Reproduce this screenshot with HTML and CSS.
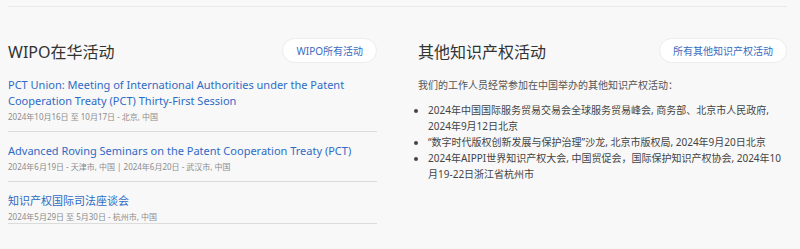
FILE: index.html
```html
<!DOCTYPE html>
<html lang="zh">
<head>
  <meta charset="UTF-8" />
  <title>WIPO在华活动</title>
  <link rel="stylesheet" href="styles.css">
</head>
<body>

<div class="events">
  <section class="col">
    <div class="col-head">
      <h2>WIPO在华活动</h2>
      <a class="pill" href="#">WIPO所有活动</a>
    </div>
    <ul class="event-list">
      <li class="event">
        <a href="#">PCT Union: Meeting of International Authorities under the Patent Cooperation Treaty (PCT) Thirty-First Session</a>
        <div class="meta">2024年10月16日 至 10月17日 - 北京, 中国</div>
      </li>
      <li class="event">
        <a href="#">Advanced Roving Seminars on the Patent Cooperation Treaty (PCT)</a>
        <div class="meta">2024年6月19日 - 天津市, 中国 | 2024年6月20日 - 武汉市, 中国</div>
      </li>
      <li class="event">
        <a href="#">知识产权国际司法座谈会</a>
        <div class="meta">2024年5月29日 至 5月30日 - 杭州市, 中国</div>
      </li>
    </ul>
  </section>

  <section class="col">
    <div class="col-head">
      <h2>其他知识产权活动</h2>
      <a class="pill" href="#">所有其他知识产权活动</a>
    </div>
    <p class="intro">我们的工作人员经常参加在中国举办的其他知识产权活动：</p>
    <ul class="bullets">
      <li>2024年中国国际服务贸易交易会全球服务贸易峰会, 商务部、北京市人民政府, 2024年9月12日北京</li>
      <li>“数字时代版权创新发展与保护治理”沙龙, 北京市版权局, 2024年9月20日北京</li>
      <li>2024年AIPPI世界知识产权大会, 中国贸促会，国际保护知识产权协会, 2024年10月19-22日浙江省杭州市</li>
    </ul>
  </section>
</div>

</body>
</html>
```

FILE: styles.css
```css
* { box-sizing: border-box; }

html, body {
  margin: 0;
  padding: 0;
  background: #f8f8f8;
  font-family: "Noto Sans", "Noto Sans CJK SC", sans-serif;
  color: #444;
  overflow: hidden;
}

.events {
  margin: 6px 13px 0 8px;
  border-top: 1px solid #e9e9e9;
  padding-top: 31px;
  display: grid;
  grid-template-columns: 1fr 1fr;
  column-gap: 41px;
}

.col-head {
  display: flex;
  align-items: center;
  justify-content: space-between;
  height: 25px;
  margin-bottom: 14px;
}

.col-head h2 {
  margin: 0;
  font-size: 16px;
  font-weight: 400;
  color: #333;
}

.pill {
  display: inline-flex;
  align-items: center;
  height: 25px;
  padding: 0 13px;
  border-radius: 13px;
  background: #fff;
  border: 1px solid #ececec;
  color: #3a6cc0;
  font-size: 10px;
  text-decoration: none;
}

.event-list {
  list-style: none;
  margin: 0;
  padding: 0;
}

.event {
  padding: 0 0 8px;
  margin-bottom: 11px;
  border-bottom: 1px solid #dcdcdc;
}

.event:last-child {
  padding-bottom: 0;
}

.event a {
  display: block;
  font-size: 11px;
  line-height: 16px;
  color: #2f6bc6;
  text-decoration: none;
}

.meta {
  margin-top: 2px;
  font-size: 8px;
  line-height: 12px;
  color: #8c8c8c;
}

.intro {
  margin: 0 0 9px;
  font-size: 10px;
  line-height: 16px;
  color: #555;
}

.bullets {
  margin: 0;
  padding-left: 10px;
  font-size: 10px;
  line-height: 16px;
  color: #444;
}
```
